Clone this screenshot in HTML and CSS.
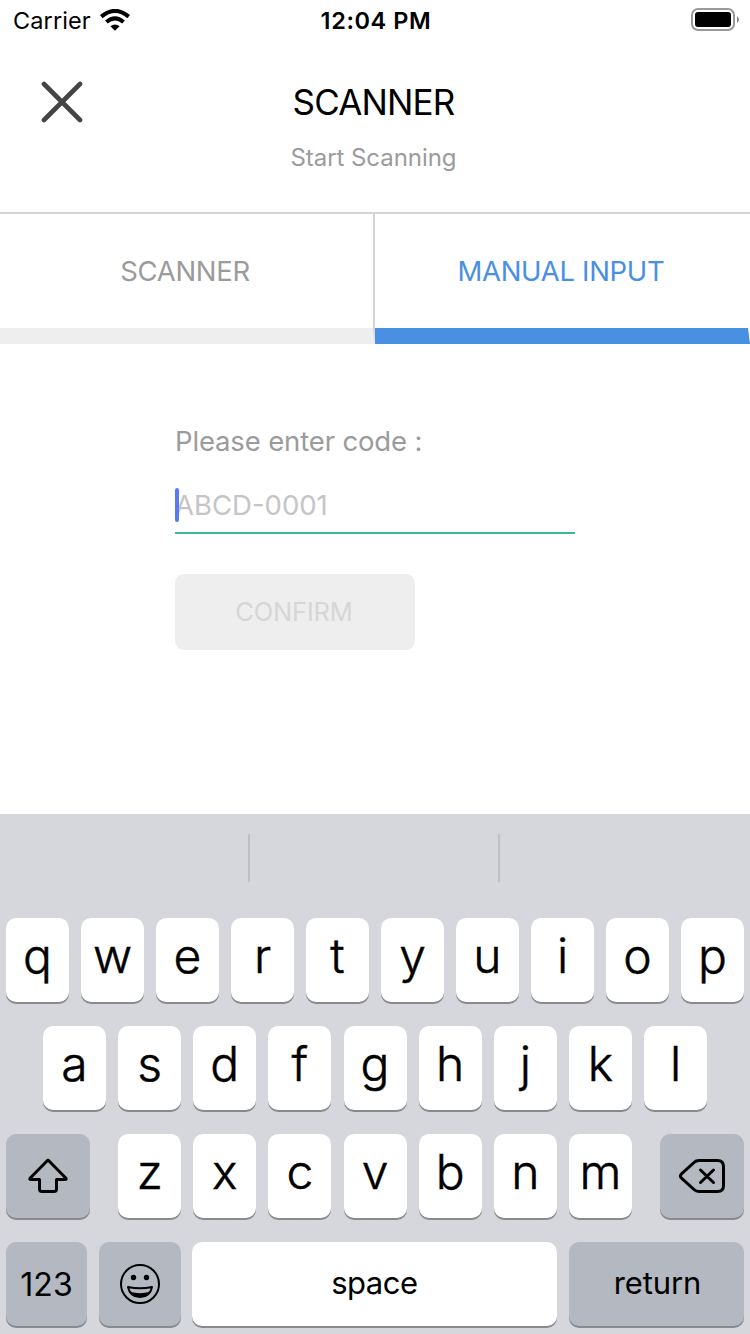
FILE: index.html
```html
<!DOCTYPE html>
<html lang="en">
<head>
<meta charset="utf-8">
<title>Scanner</title>
<link rel="stylesheet" href="styles.css">
</head>
<body>
<div class="screen">
  <div class="status">
    <div class="carrier"><span class="carrier-name">Carrier</span>
      <svg class="wifi" width="30" height="22" viewBox="0 0 30 22" fill="none" stroke="#000" stroke-width="4"><path d="M1.3 7.6Q15-3.800 28.7 7.6M6.4 13.1Q15 5.6 23.6 13.1"/><path d="M15 21.8L10.4 17.2Q15 13.6 19.6 17.2Z" fill="#000" stroke="none"/></svg>
    </div>
    <div class="time">12:04 PM</div>
    <svg class="battery" width="48" height="24" viewBox="0 0 48 24"><rect x="1" y="1" width="42" height="21" rx="6" fill="none" stroke="#999" stroke-width="2"/><rect x="4" y="4" width="36" height="15" rx="3" fill="#000"/><path d="M46 8Q50 11.500 46 15Z" fill="#888"/></svg>
  </div>
  <header class="header">
    <svg class="close" width="42" height="42" viewBox="0 0 42 42" stroke="#444" stroke-width="4.600" stroke-linecap="round"><path d="M3 3L39 39M39 3L3 39"/></svg>
    <div class="titles"><h1 class="title">SCANNER</h1><p class="subtitle">Start Scanning</p></div>
  </header>
  <nav class="tabs">
    <div class="tab"><span class="tab-scanner">SCANNER</span></div>
    <div class="tab active"><span class="tab-manual">MANUAL INPUT</span></div>
  </nav>
  <main class="form">
    <label class="label">Please enter code :</label>
    <div class="field"><span class="placeholder">ABCD-0001</span><i class="caret"></i></div>
    <div class="confirm"><span>CONFIRM</span></div>
  </main>
  <section class="keyboard">
    <div class="suggestions"><i></i><i></i><i></i></div>
    <div class="row"><b class="key">q</b><b class="key">w</b><b class="key">e</b><b class="key">r</b><b class="key">t</b><b class="key">y</b><b class="key">u</b><b class="key">i</b><b class="key">o</b><b class="key">p</b></div>
    <div class="row home"><b class="key">a</b><b class="key">s</b><b class="key">d</b><b class="key">f</b><b class="key">g</b><b class="key">h</b><b class="key">j</b><b class="key">k</b><b class="key">l</b></div>
    <div class="row">
      <b class="key gray shift"><svg width="84" height="84" viewBox="0 0 84 84" fill="none" stroke="#000" stroke-width="3" stroke-linejoin="round"><path d="M42 26L24 44.200Q23.200 45.500 25 45.500H33.500V55Q33.500 57.500 36 57.500H48Q50.500 57.500 50.500 55V45.500H59Q60.800 45.500 60 44.200Z"/></svg></b>
      <div class="letters"><b class="key">z</b><b class="key">x</b><b class="key">c</b><b class="key">v</b><b class="key">b</b><b class="key">n</b><b class="key">m</b></div>
      <b class="key gray shift"><svg width="84" height="84" viewBox="0 0 84 84" fill="none" stroke="#000" stroke-width="3" stroke-linejoin="round" stroke-linecap="round"><path d="M39 26.500H57.500Q63.500 26.500 63.500 32.500V51.500Q63.500 57.500 57.500 57.500H39Q36 57.500 34 55.500L21.200 43.800Q19.600 42 21.200 40.200L34 28.500Q36 26.500 39 26.500ZM40.500 36L53.500 48.500M53.500 36L40.500 48.500"/></svg></b>
    </div>
    <div class="row bottom">
      <b class="key gray num"><span>123</span></b>
      <b class="key gray emoji"><svg width="82" height="84" viewBox="0 0 82 84"><circle cx="41" cy="42" r="19" fill="none" stroke="#000" stroke-width="2"/><circle cx="34.500" cy="35.500" r="2.700"/><circle cx="47.500" cy="35.500" r="2.700"/><path d="M29 45Q41 47.500 53 45Q51 55 41 55Q31 55 29 45Z" fill="none" stroke="#000" stroke-width="2" stroke-linejoin="round"/><path d="M30.500 49.500Q41 53 51.500 49.500Q48 55 41 55Q34 55 30.500 49.500Z"/></svg></b>
      <b class="key space"><span>space</span></b>
      <b class="key gray return"><span>return</span></b>
    </div>
  </section>
</div>
</body>
</html>
```
FILE: styles.css
```css
* { box-sizing: border-box; margin: 0; padding: 0; }
body { background: #fff; font-family: Inter, "Liberation Sans", sans-serif; }
svg { display: block; flex: none; }
.screen { width: 750px; height: 1334px; display: flex; flex-direction: column; overflow: hidden; }
.status { height: 40px; display: grid; grid-template-columns: 1fr auto 1fr; align-items: start; padding: 0 11px 0 13px; font-size: 23.500px; line-height: 41px; white-space: nowrap; }
.carrier { display: flex; }
.carrier-name { width: 86.500px; letter-spacing: 0.100px; }
.wifi { margin-top: 9px; }
.time { font-weight: 600; letter-spacing: 0.600px; }
.battery { justify-self: end; margin-top: 8px; }
.header { height: 172px; display: grid; grid-template-columns: 84px 1fr 84px; padding-top: 41px; }
.close { margin-left: 41px; }
.titles { text-align: center; margin-left: -3px; }
.title { font-size: 35px; line-height: 42px; font-weight: 400; letter-spacing: -0.850px; }
.subtitle { margin-top: 19px; font-size: 24px; line-height: 32px; letter-spacing: -0.050px; color: #9b9b9b; }
.tabs { display: grid; grid-template-columns: 1fr 1fr; grid-template-rows: 130px; height: 132px; border-top: 2px solid #d4d4d4; }
.tab { border-right: 2px solid #d4d4d4; border-bottom: 16px solid #eee; padding-right: 3px; text-align: center; font-size: 27.500px; line-height: 114px; color: #9b9b9b; }
.tab.active { padding-right: 1px; color: #4990e2; border-right-color: #fff; border-bottom-color: #4990e2; }
.tab-scanner { letter-spacing: -0.300px; }
.tab-manual { letter-spacing: -0.300px; }
.form { height: 470px; padding: 79px 175px 0; display: flex; flex-direction: column; align-items: flex-start; }
.label { font-size: 27.500px; line-height: 37px; letter-spacing: -0.150px; color: #9b9b9b; }
.field { position: relative; width: 400px; height: 74px; border-bottom: 2px solid #35bd9b; font-size: 27.500px; line-height: 90px; color: #c5c5c7; }
.placeholder { letter-spacing: 0; }
.caret { position: absolute; left: 0; top: 28px; width: 4px; height: 34px; border-radius: 2px; background: #567cf5; }
.confirm { width: 240px; height: 76px; margin-top: 40px; background: #eee; border-radius: 9px; text-align: center; padding-right: 2px; font-size: 25.500px; line-height: 75px; letter-spacing: -0.200px; color: #d6d6d6; }
.keyboard { height: 520px; background: #d6d7dc; }
.suggestions { height: 104px; display: flex; padding-top: 20px; }
.suggestions i { width: 250px; height: 48px; border-right: 2px solid #bfc0c5; }
.suggestions i:last-child { border: 0; }
.row { height: 108px; padding: 0 6px; display: flex; justify-content: space-between; }
.home { padding: 0 43px; }
.letters { width: 514px; padding-left: 0.200px; display: flex; justify-content: space-between; }
.key { flex: none; width: 63px; height: 84px; border-radius: 10px; background: #fff; box-shadow: 0 2px 0 #898a8d; text-align: center; font-size: 48px; line-height: 75px; font-weight: 300; -webkit-text-stroke: 0.500px #000; }
.gray { background: #b3b8c1; }
.shift { width: 84px; }
.bottom .key { font-size: 31px; line-height: 81px; font-weight: 400; -webkit-text-stroke: 0; }
.bottom .num { width: 81px; font-size: 32px; line-height: 86px; }
.bottom .emoji { width: 82px; }
.bottom .space { width: 365px; padding-right: 1px; letter-spacing: -0.500px; }
.bottom .return { width: 175px; padding-left: 2px; letter-spacing: -0.100px; }
```
